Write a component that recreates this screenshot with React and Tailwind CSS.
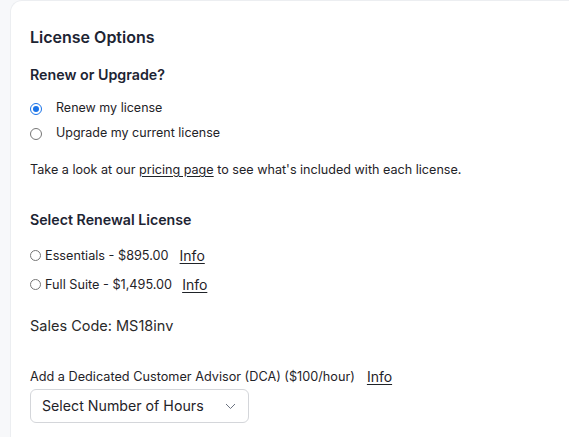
import React, { useState } from "react";

const Radio = ({ checked }) => (
  <span
    className={`inline-flex items-center justify-center w-[12px] h-[12px] rounded-full border ${
      checked ? "border-[#1a73e8]" : "border-[#767676]"
    } bg-white`}
  >
    {checked && <span className="w-[6px] h-[6px] rounded-full bg-[#1a73e8]" />}
  </span>
);

const SmallRadio = () => (
  <span className="inline-block w-[11px] h-[11px] rounded-full border border-[#767676] bg-white" />
);

const App = () => {
  const [mode] = useState("renew");

  return (
    <div
      className="h-[437px] bg-[#f7f8fa] pl-[10px] overflow-hidden"
      style={{ fontFamily: "Inter, 'Noto Sans', sans-serif" }}
    >
      <div className="bg-white rounded-tl-[12px] border-l border-t border-[#eceef1] h-full pl-[19px] pt-6 text-[#1f2328]">
        <h1 className="text-[16px] leading-6 font-semibold text-[#1d2433]">License Options</h1>

        {/* RENEW OR UPGRADE */}
        <h2 className="mt-[15px] text-[14.25px] leading-[22px] font-semibold text-[#1d2433]">
          Renew or Upgrade?
        </h2>
        <div className="mt-[10px]">
          <label className="flex items-center h-[25px] text-[12.5px] gap-[14px]">
            <Radio checked={mode === "renew"} />
            <span>Renew my license</span>
          </label>
          <label className="flex items-center h-[25px] text-[12.5px] gap-[14px]">
            <Radio checked={mode === "upgrade"} />
            <span>Upgrade my current license</span>
          </label>
        </div>

        <p className="mt-[14px] text-[12.6px] leading-5">
          Take a look at our <span className="underline underline-offset-2">pricing page</span> to see
          what's included with each license.
        </p>

        {/* RENEWAL LICENSE */}
        <h2 className="mt-[29px] text-[14.2px] leading-[22px] font-semibold text-[#1d2433]">
          Select Renewal License
        </h2>
        <div className="mt-[10px]">
          <div className="flex items-center h-[29px] text-[12.7px]">
            <SmallRadio />
            <span className="ml-[4px]">Essentials - $895.00</span>
            <span className="ml-[11px] text-[14px] underline underline-offset-2">Info</span>
          </div>
          <div className="flex items-center h-[29px] text-[12.7px]">
            <SmallRadio />
            <span className="ml-[4px]">Full Suite - $1,495.00</span>
            <span className="ml-[10px] text-[14px] underline underline-offset-2">Info</span>
          </div>
        </div>

        <p className="mt-[16px] text-[14.5px] leading-[22px] text-[#2a2a2a]">Sales Code: MS18inv</p>

        {/* DCA */}
        <div className="mt-[30px] flex items-center text-[12.7px] leading-5">
          <span>Add a Dedicated Customer Advisor (DCA) ($100/hour)</span>
          <span className="ml-[12px] text-[14px] underline underline-offset-2">Info</span>
        </div>
        <div className="mt-[2px] w-[219px] h-[34px] border border-[#d4d6da] rounded-[6px] flex items-center justify-between pl-[11px] pr-[12px]">
          <span className="text-[14.2px] text-[#1f2328]">Select Number of Hours</span>
          <svg width="11" height="7" viewBox="0 0 11 7" fill="none">
            <path d="M1 1l4.5 4.5L10 1" stroke="#6b7280" strokeWidth="1" />
          </svg>
        </div>
      </div>
    </div>
  );
};

export default App;
